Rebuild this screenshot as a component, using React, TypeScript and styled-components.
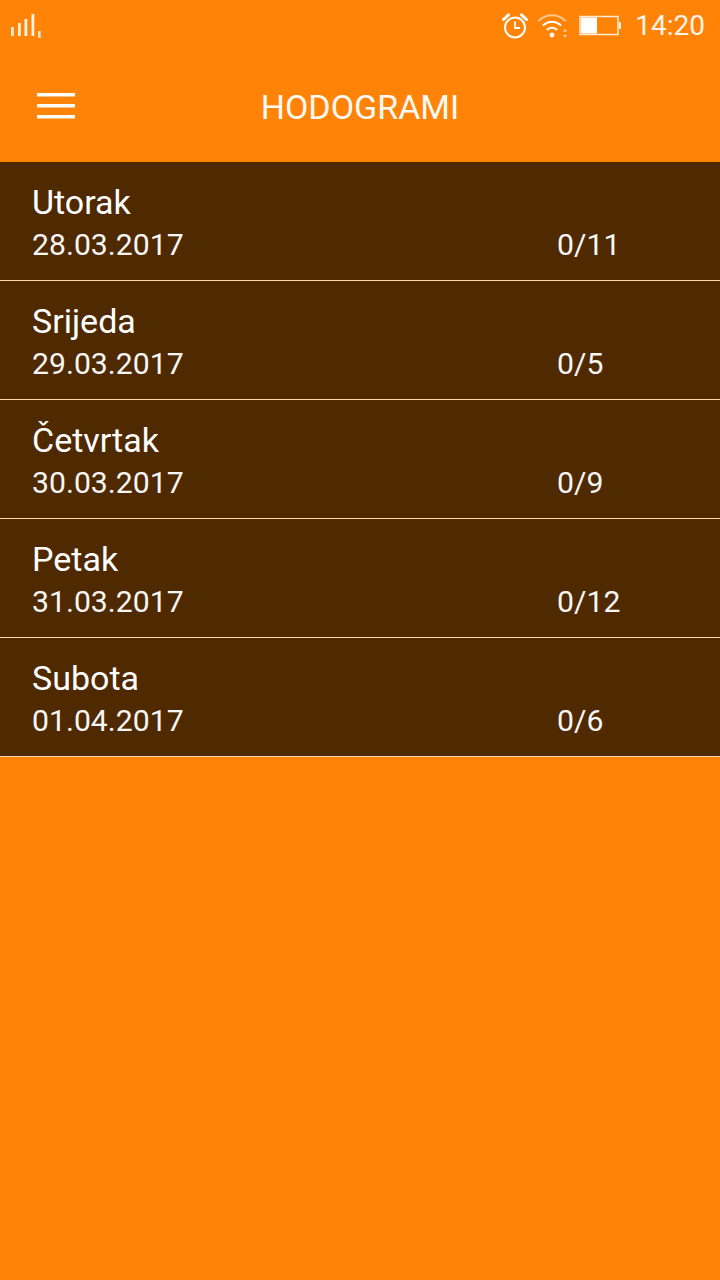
import React from 'react';
import styled, { createGlobalStyle } from 'styled-components';

const DAYS = [
  { name: 'Utorak', date: '28.03.2017', count: '0/11' },
  { name: 'Srijeda', date: '29.03.2017', count: '0/5' },
  { name: 'Četvrtak', date: '30.03.2017', count: '0/9' },
  { name: 'Petak', date: '31.03.2017', count: '0/12' },
  { name: 'Subota', date: '01.04.2017', count: '0/6' },
];

const SignalIcon = () => (
  <svg width="32" height="24" viewBox="0 0 32 24" fill="#fff">
    <rect x="0" y="13" width="2.8" height="9" opacity="0.85" />
    <rect x="7" y="9" width="2.8" height="13" opacity="0.85" />
    <rect x="13.500" y="5" width="2.8" height="17" opacity="0.9" />
    <rect x="20.500" y="0" width="2.8" height="22" opacity="0.9" />
    <rect x="27" y="17" width="2.6" height="7" opacity="0.8" />
  </svg>
);

const AlarmIcon = () => (
  <svg width="28" height="28" viewBox="0 0 28 28" fill="none" stroke="#fff" strokeWidth="2">
    <circle cx="14" cy="15.5" r="10" />
    <path d="M14 9.5V16h5" strokeWidth="1.8" />
    <path d="M2.5 7.5 7.5 2.8 M20.5 2.8 25.5 7.5" strokeWidth="3" strokeLinecap="round" />
  </svg>
);

const WifiIcon = () => (
  <svg width="32" height="28" viewBox="0 0 32 28" fill="none" stroke="#fff" strokeLinecap="round">
    <path d="M2 8.5C9.500 1.500 20.500 1.500 28 8.500" strokeWidth="2" opacity="0.55" />
    <path d="M6.500 13C11.500 8.500 18.500 8.500 23.500 13" strokeWidth="2" />
    <path d="M10.500 17.500C13 15.300 17 15.300 19.500 17.500" strokeWidth="2" />
    <circle cx="15" cy="23" r="2.400" fill="#fff" stroke="none" />
    <path d="M26 19.500l2-2.500 2 2.500zM26 23l2 2.500 2-2.500z" fill="#fff" stroke="none" opacity="0.7" />
  </svg>
);

const BatteryIcon = () => (
  <svg width="45" height="22" viewBox="-2 0 45 22">
    <rect x="1" y="1.500" width="38" height="18" fill="none" stroke="#fff" strokeWidth="1.500" opacity="0.85" />
    <rect x="2" y="2.500" width="16" height="16" fill="#fff" />
    <rect x="40" y="7" width="2" height="7" fill="#fff" opacity="0.85" />
  </svg>
);

const MenuIcon = () => (
  <svg width="38" height="26" viewBox="0 0 38 26" fill="#fff">
    <rect x="0" y="0" width="38" height="3.500" />
    <rect x="0" y="11" width="38" height="3.500" />
    <rect x="0" y="22" width="38" height="3.500" />
  </svg>
);

const App: React.FC = () => {
  return (
    <Page>
      <GlobalStyle />
      <StatusBar>
        <SignalIcon />
        <StatusRight>
          <AlarmIcon />
          <WifiIcon />
          <BatteryIcon />
          <Clock>14:20</Clock>
        </StatusRight>
      </StatusBar>
      <Toolbar>
        <MenuBtn>
          <MenuIcon />
        </MenuBtn>
        <Title>HODOGRAMI</Title>
      </Toolbar>
      <DayList>
        {DAYS.map(day => (
          <DayRow key={day.date}>
            <DayName>{day.name}</DayName>
            <DayInfo>
              <span>{day.date}</span>
              <span>{day.count}</span>
            </DayInfo>
          </DayRow>
        ))}
      </DayList>
    </Page>
  );
};

export default App;

const GlobalStyle = createGlobalStyle`
  html, body {
    margin: 0;
    padding: 0;
    background: #ff8306;
  }
`;

const Page = styled.div`
  width: 720px;
  height: 1280px;
  overflow: hidden;
  background: #ff8306;
  color: #fff;
  font-family: Roboto, 'Liberation Sans', sans-serif;
`;

const StatusBar = styled.div`
  height: 50px;
  box-sizing: border-box;
  padding: 1px 15px 0 11px;
  display: flex;
  align-items: center;
  justify-content: space-between;
`;

const StatusRight = styled.div`
  display: flex;
  align-items: center;
  gap: 8px;
`;

const Clock = styled.span`
  font-size: 28px;
  margin-left: 5px;
  opacity: 0.92;
`;

const Toolbar = styled.div`
  height: 112px;
  display: grid;
  grid-template-columns: 1fr auto 1fr;
  align-items: center;
`;

const MenuBtn = styled.div`
  padding-left: 37px;
  line-height: 0;
`;

const Title = styled.h1`
  margin: 2px 0 0;
  font-size: 34px;
  font-weight: 400;
  line-height: 36px;
  opacity: 0.96;
`;

const DayList = styled.div`
  background: #4f2900;
`;

const DayRow = styled.div`
  height: 119px;
  box-sizing: border-box;
  padding: 20px 0 0 32px;
  border-bottom: 1px solid #ffd9ae;
`;

const DayName = styled.div`
  font-size: 34px;
  line-height: 41px;
`;

const DayInfo = styled.div`
  display: grid;
  grid-template-columns: 525px auto;
  font-size: 30.2px;
  line-height: 44px;
  opacity: 0.96;
`;
